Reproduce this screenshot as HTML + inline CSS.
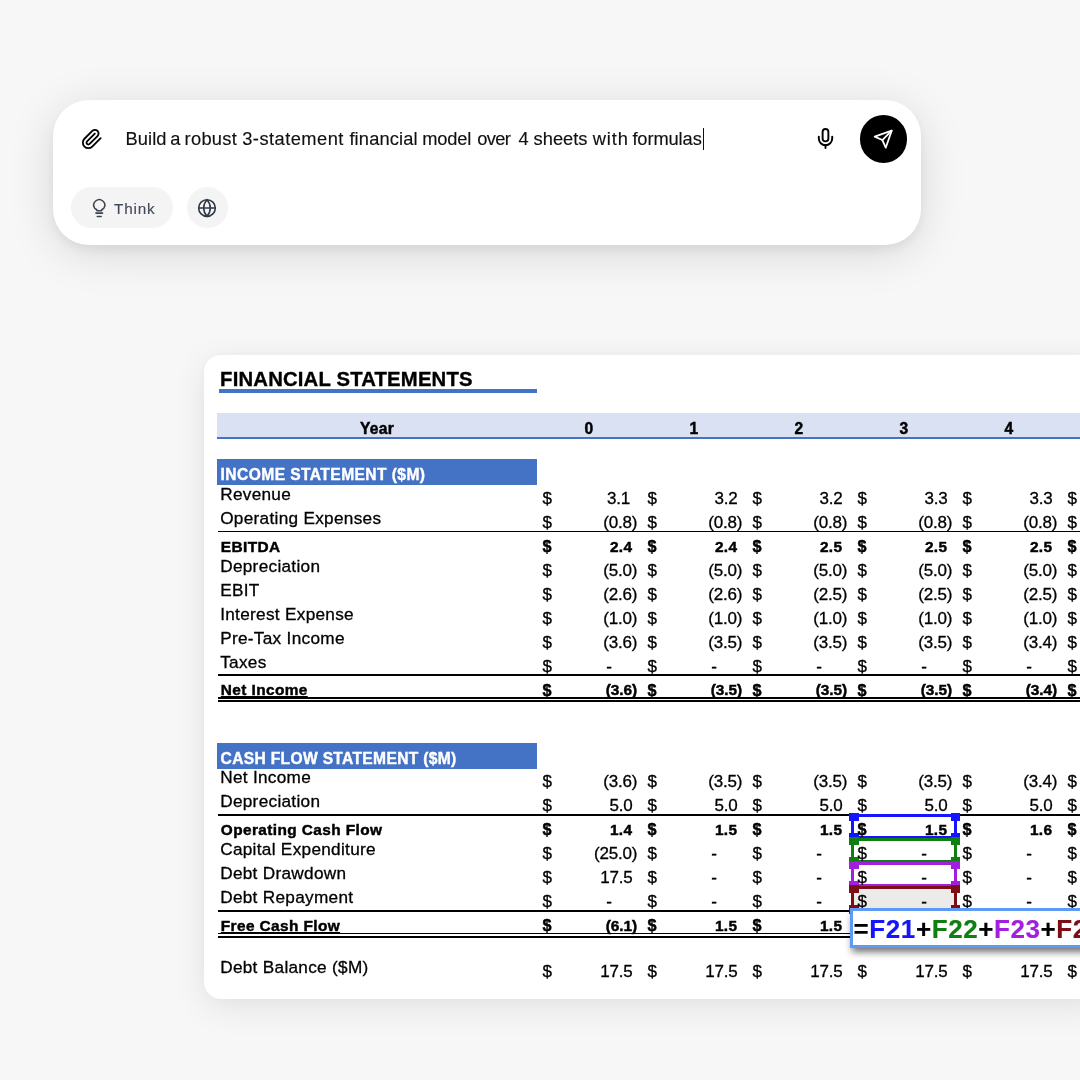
<!DOCTYPE html>
<html lang="en"><head><meta charset="utf-8"><title>Financial model</title>
<style>
html,body{margin:0;padding:0}
body{width:1080px;height:1080px;overflow:hidden;background:#f7f7f7;position:relative;font-family:"Liberation Sans",sans-serif;color:#000}
.abs,.t{position:absolute}
.t{white-space:nowrap;line-height:1;margin:0;-webkit-text-stroke:.3px}
#chat{left:53px;top:100.3px;width:867.7px;height:144.6px;border-radius:36px;background:#fff;box-shadow:0 8px 46px rgba(0,0,0,.13),0 5px 12px rgba(0,0,0,.06)}
#sheet{left:204.3px;top:354.7px;width:900px;height:644.3px;border-radius:17px;background:#fff;box-shadow:0 8px 34px rgba(0,0,0,.09),0 0 12px rgba(0,0,0,.03)}
.lab{font-size:17.2px;letter-spacing:.3px}
.b{font-weight:bold;-webkit-text-stroke:.45px}
.blab{font-size:15.4px;font-weight:bold;letter-spacing:.4px;-webkit-text-stroke:.45px}
.n{font-size:17px;letter-spacing:-.2px}
.nb{font-size:15.4px;font-weight:bold;letter-spacing:.35px;-webkit-text-stroke:.45px}
.hl{position:absolute;background:#000}
.band{position:absolute;left:216.9px;width:320.6px;background:#4472c4}
.bt{color:#fff;font-weight:bold;font-size:15.6px;letter-spacing:.42px;-webkit-text-stroke:.4px}
.u{text-decoration:underline;text-decoration-thickness:1.3px;text-underline-offset:1.4px}
</style></head><body><div id="root" style="position:absolute;left:0;top:0;width:1080px;height:1080px;will-change:transform">
<div id="chat" class="abs"></div>
<svg class="abs" style="left:80.5px;top:127.5px" width="22" height="22" viewBox="0 0 24 24" fill="none" stroke="#000" stroke-width="2" stroke-linecap="round" stroke-linejoin="round"><path d="m21.44 11.05-9.19 9.19a6 6 0 0 1-8.49-8.49l8.57-8.57A4 4 0 1 1 18 8.84l-8.59 8.57a2 2 0 0 1-2.83-2.83l8.49-8.48"/></svg>
<div class="t" id="prompt" style="left:0;top:130.2px;font-size:18.3px;color:#111;-webkit-text-stroke:.15px"><span style="position:absolute;left:125.5px;letter-spacing:0.075px">Build</span> <span style="position:absolute;left:170.3px;letter-spacing:0px">a</span> <span style="position:absolute;left:184.6px;letter-spacing:0.28px">robust</span> <span style="position:absolute;left:242.2px;letter-spacing:0.47px">3-statement</span> <span style="position:absolute;left:349.4px;letter-spacing:0.15px">financial</span> <span style="position:absolute;left:422.3px;letter-spacing:-0.175px">model</span> <span style="position:absolute;left:477.3px;letter-spacing:-0.667px">over</span> <span style="position:absolute;left:518.6px;letter-spacing:0px">4</span> <span style="position:absolute;left:533.6px;letter-spacing:0.0px">sheets</span> <span style="position:absolute;left:592.7px;letter-spacing:0.867px">with</span> <span style="position:absolute;left:632.4px;letter-spacing:-0.1px">formulas</span></div>
<div class="abs" style="left:702.8px;top:128.1px;width:1.2px;height:21.6px;background:#111"></div>
<svg class="abs" style="left:814.1px;top:127.2px" width="23" height="23" viewBox="0 0 24 24" fill="none" stroke="#000" stroke-width="2" stroke-linecap="round" stroke-linejoin="round"><path d="M12 2a3 3 0 0 0-3 3v7a3 3 0 0 0 6 0V5a3 3 0 0 0-3-3Z"/><path d="M19 10v2a7 7 0 0 1-14 0v-2"/><path d="M12 19v3"/></svg>
<div class="abs" style="left:859.5px;top:114.8px;width:47.8px;height:47.8px;border-radius:50%;background:#000"></div>
<svg class="abs" style="left:873.4px;top:128.7px" width="20.4" height="20.4" viewBox="0 0 24 24" fill="none" stroke="#fff" stroke-width="2.1" stroke-linecap="round" stroke-linejoin="round"><path d="m22 2-7 20-4-9-9-4Z"/><path d="M22 2 11 13"/></svg>
<div class="abs" style="left:71px;top:187.4px;width:102px;height:40.8px;border-radius:21px;background:#f4f4f4"></div>
<svg class="abs" style="left:90px;top:196px" width="20" height="24" viewBox="0 0 20 24" fill="none" stroke="#3b4250" stroke-width="1.55" stroke-linecap="round" stroke-linejoin="round"><path d="M7 14.7C7 13.100 5.300 13.200 4.490 11.950A5.500 5.500 0 1 1 14.010 11.950C13.200 13.200 11.500 13.100 11.500 14.700Z"/><path d="M5.9 17.1h6.700"/><path d="M7.300 20.400h3.900"/></svg>
<div class="t " style="left:114.1px;top:200.6px;font-size:15.3px;color:#414858;letter-spacing:.78px;-webkit-text-stroke:.12px">Think</div>
<div class="abs" style="left:186.8px;top:187.4px;width:40.8px;height:40.8px;border-radius:50%;background:#f4f4f4"></div>
<svg class="abs" style="left:197.2px;top:197.8px" width="20" height="20" viewBox="0 0 24 24" fill="none" stroke="#2f3747" stroke-width="1.9" stroke-linecap="round" stroke-linejoin="round"><circle cx="12" cy="12" r="10"/><path d="M2 12h20"/><path d="M12 2a15.300 15.300 0 0 1 4 10 15.300 15.300 0 0 1-4 10 15.300 15.300 0 0 1-4-10 15.300 15.300 0 0 1 4-10z"/></svg>
<div id="sheet" class="abs"></div>
<div class="t b" style="left:220.1px;top:368.7px;font-size:20.3px;letter-spacing:.18px;-webkit-text-stroke:.35px">FINANCIAL STATEMENTS</div>
<div class="abs" style="left:218.7px;top:389.1px;width:318.7px;height:3.5px;background:#4472c4"></div>
<div class="abs" style="left:217.2px;top:412.9px;width:900px;height:24.6px;background:#d9e1f2"></div>
<div class="abs" style="left:217.2px;top:437.2px;width:900px;height:1.5px;background:#4472c4"></div>
<div class="t b" style="left:360.0px;top:420.9px;font-size:15.6px;letter-spacing:.3px">Year</div>
<div class="t b" style="left:584.6px;top:420.9px;font-size:15.6px;">0</div>
<div class="t b" style="left:689.6px;top:420.9px;font-size:15.6px;">1</div>
<div class="t b" style="left:794.6px;top:420.9px;font-size:15.6px;">2</div>
<div class="t b" style="left:899.6px;top:420.9px;font-size:15.6px;">3</div>
<div class="t b" style="left:1004.6px;top:420.9px;font-size:15.6px;">4</div>
<div class="band" style="top:458.9px;height:25.8px"></div>
<div class="t bt" style="left:220.6px;top:467.0px;font-size:15.6px;letter-spacing:.42px">INCOME STATEMENT ($M)</div>
<div class="t lab" style="left:220.2px;top:485.7px;font-size:17.2px;">Revenue</div>
<div class="t n" style="left:542.6px;top:489.7px;font-size:17.0px;">$</div>
<div class="t n" style="left:550.0px;width:80px;text-align:right;top:489.7px;font-size:17.0px;">3.1</div>
<div class="t n" style="left:647.6px;top:489.7px;font-size:17.0px;">$</div>
<div class="t n" style="left:657.6px;width:80px;text-align:right;top:489.7px;font-size:17.0px;">3.2</div>
<div class="t n" style="left:752.6px;top:489.7px;font-size:17.0px;">$</div>
<div class="t n" style="left:762.6px;width:80px;text-align:right;top:489.7px;font-size:17.0px;">3.2</div>
<div class="t n" style="left:857.6px;top:489.7px;font-size:17.0px;">$</div>
<div class="t n" style="left:867.6px;width:80px;text-align:right;top:489.7px;font-size:17.0px;">3.3</div>
<div class="t n" style="left:962.6px;top:489.7px;font-size:17.0px;">$</div>
<div class="t n" style="left:972.6px;width:80px;text-align:right;top:489.7px;font-size:17.0px;">3.3</div>
<div class="t n" style="left:1067.6px;top:489.7px;font-size:17.0px;">$</div>
<div class="t lab" style="left:220.2px;top:509.7px;font-size:17.2px;">Operating Expenses</div>
<div class="t n" style="left:542.6px;top:513.6px;font-size:17.0px;">$</div>
<div class="t n" style="left:557.2px;width:80px;text-align:right;top:513.6px;font-size:17.0px;">(0.8)</div>
<div class="t n" style="left:647.6px;top:513.6px;font-size:17.0px;">$</div>
<div class="t n" style="left:662.2px;width:80px;text-align:right;top:513.6px;font-size:17.0px;">(0.8)</div>
<div class="t n" style="left:752.6px;top:513.6px;font-size:17.0px;">$</div>
<div class="t n" style="left:767.2px;width:80px;text-align:right;top:513.6px;font-size:17.0px;">(0.8)</div>
<div class="t n" style="left:857.6px;top:513.6px;font-size:17.0px;">$</div>
<div class="t n" style="left:872.2px;width:80px;text-align:right;top:513.6px;font-size:17.0px;">(0.8)</div>
<div class="t n" style="left:962.6px;top:513.6px;font-size:17.0px;">$</div>
<div class="t n" style="left:977.2px;width:80px;text-align:right;top:513.6px;font-size:17.0px;">(0.8)</div>
<div class="t n" style="left:1067.6px;top:513.6px;font-size:17.0px;">$</div>
<div class="hl" style="left:217.5px;width:900px;top:530.5px;height:1.9px"></div>
<div class="t blab" style="left:220.8px;top:538.5px;font-size:15.4px;">EBITDA</div>
<div class="t nb" style="left:542.6px;top:537.8px;font-size:16.2px;">$</div>
<div class="t nb" style="left:552.4px;width:80px;text-align:right;top:538.5px;font-size:15.4px;">2.4</div>
<div class="t nb" style="left:647.6px;top:537.8px;font-size:16.2px;">$</div>
<div class="t nb" style="left:657.4px;width:80px;text-align:right;top:538.5px;font-size:15.4px;">2.4</div>
<div class="t nb" style="left:752.6px;top:537.8px;font-size:16.2px;">$</div>
<div class="t nb" style="left:762.4px;width:80px;text-align:right;top:538.5px;font-size:15.4px;">2.5</div>
<div class="t nb" style="left:857.6px;top:537.8px;font-size:16.2px;">$</div>
<div class="t nb" style="left:867.4px;width:80px;text-align:right;top:538.5px;font-size:15.4px;">2.5</div>
<div class="t nb" style="left:962.6px;top:537.8px;font-size:16.2px;">$</div>
<div class="t nb" style="left:972.4px;width:80px;text-align:right;top:538.5px;font-size:15.4px;">2.5</div>
<div class="t nb" style="left:1067.6px;top:537.8px;font-size:16.2px;">$</div>
<div class="t lab" style="left:220.2px;top:557.6px;font-size:17.2px;">Depreciation</div>
<div class="t n" style="left:542.6px;top:561.6px;font-size:17.0px;">$</div>
<div class="t n" style="left:557.2px;width:80px;text-align:right;top:561.6px;font-size:17.0px;">(5.0)</div>
<div class="t n" style="left:647.6px;top:561.6px;font-size:17.0px;">$</div>
<div class="t n" style="left:662.2px;width:80px;text-align:right;top:561.6px;font-size:17.0px;">(5.0)</div>
<div class="t n" style="left:752.6px;top:561.6px;font-size:17.0px;">$</div>
<div class="t n" style="left:767.2px;width:80px;text-align:right;top:561.6px;font-size:17.0px;">(5.0)</div>
<div class="t n" style="left:857.6px;top:561.6px;font-size:17.0px;">$</div>
<div class="t n" style="left:872.2px;width:80px;text-align:right;top:561.6px;font-size:17.0px;">(5.0)</div>
<div class="t n" style="left:962.6px;top:561.6px;font-size:17.0px;">$</div>
<div class="t n" style="left:977.2px;width:80px;text-align:right;top:561.6px;font-size:17.0px;">(5.0)</div>
<div class="t n" style="left:1067.6px;top:561.6px;font-size:17.0px;">$</div>
<div class="t lab" style="left:220.2px;top:581.6px;font-size:17.2px;">EBIT</div>
<div class="t n" style="left:542.6px;top:585.6px;font-size:17.0px;">$</div>
<div class="t n" style="left:557.2px;width:80px;text-align:right;top:585.6px;font-size:17.0px;">(2.6)</div>
<div class="t n" style="left:647.6px;top:585.6px;font-size:17.0px;">$</div>
<div class="t n" style="left:662.2px;width:80px;text-align:right;top:585.6px;font-size:17.0px;">(2.6)</div>
<div class="t n" style="left:752.6px;top:585.6px;font-size:17.0px;">$</div>
<div class="t n" style="left:767.2px;width:80px;text-align:right;top:585.6px;font-size:17.0px;">(2.5)</div>
<div class="t n" style="left:857.6px;top:585.6px;font-size:17.0px;">$</div>
<div class="t n" style="left:872.2px;width:80px;text-align:right;top:585.6px;font-size:17.0px;">(2.5)</div>
<div class="t n" style="left:962.6px;top:585.6px;font-size:17.0px;">$</div>
<div class="t n" style="left:977.2px;width:80px;text-align:right;top:585.6px;font-size:17.0px;">(2.5)</div>
<div class="t n" style="left:1067.6px;top:585.6px;font-size:17.0px;">$</div>
<div class="t lab" style="left:220.2px;top:605.6px;font-size:17.2px;">Interest Expense</div>
<div class="t n" style="left:542.6px;top:609.6px;font-size:17.0px;">$</div>
<div class="t n" style="left:557.2px;width:80px;text-align:right;top:609.6px;font-size:17.0px;">(1.0)</div>
<div class="t n" style="left:647.6px;top:609.6px;font-size:17.0px;">$</div>
<div class="t n" style="left:662.2px;width:80px;text-align:right;top:609.6px;font-size:17.0px;">(1.0)</div>
<div class="t n" style="left:752.6px;top:609.6px;font-size:17.0px;">$</div>
<div class="t n" style="left:767.2px;width:80px;text-align:right;top:609.6px;font-size:17.0px;">(1.0)</div>
<div class="t n" style="left:857.6px;top:609.6px;font-size:17.0px;">$</div>
<div class="t n" style="left:872.2px;width:80px;text-align:right;top:609.6px;font-size:17.0px;">(1.0)</div>
<div class="t n" style="left:962.6px;top:609.6px;font-size:17.0px;">$</div>
<div class="t n" style="left:977.2px;width:80px;text-align:right;top:609.6px;font-size:17.0px;">(1.0)</div>
<div class="t n" style="left:1067.6px;top:609.6px;font-size:17.0px;">$</div>
<div class="t lab" style="left:220.2px;top:629.6px;font-size:17.2px;">Pre-Tax Income</div>
<div class="t n" style="left:542.6px;top:633.5px;font-size:17.0px;">$</div>
<div class="t n" style="left:557.2px;width:80px;text-align:right;top:633.5px;font-size:17.0px;">(3.6)</div>
<div class="t n" style="left:647.6px;top:633.5px;font-size:17.0px;">$</div>
<div class="t n" style="left:662.2px;width:80px;text-align:right;top:633.5px;font-size:17.0px;">(3.5)</div>
<div class="t n" style="left:752.6px;top:633.5px;font-size:17.0px;">$</div>
<div class="t n" style="left:767.2px;width:80px;text-align:right;top:633.5px;font-size:17.0px;">(3.5)</div>
<div class="t n" style="left:857.6px;top:633.5px;font-size:17.0px;">$</div>
<div class="t n" style="left:872.2px;width:80px;text-align:right;top:633.5px;font-size:17.0px;">(3.5)</div>
<div class="t n" style="left:962.6px;top:633.5px;font-size:17.0px;">$</div>
<div class="t n" style="left:977.2px;width:80px;text-align:right;top:633.5px;font-size:17.0px;">(3.4)</div>
<div class="t n" style="left:1067.6px;top:633.5px;font-size:17.0px;">$</div>
<div class="t lab" style="left:220.2px;top:653.6px;font-size:17.2px;">Taxes</div>
<div class="t n" style="left:542.6px;top:657.5px;font-size:17.0px;">$</div>
<div class="t n" style="left:606.3px;top:657.5px;font-size:17.0px;">-</div>
<div class="t n" style="left:647.6px;top:657.5px;font-size:17.0px;">$</div>
<div class="t n" style="left:711.3px;top:657.5px;font-size:17.0px;">-</div>
<div class="t n" style="left:752.6px;top:657.5px;font-size:17.0px;">$</div>
<div class="t n" style="left:816.3px;top:657.5px;font-size:17.0px;">-</div>
<div class="t n" style="left:857.6px;top:657.5px;font-size:17.0px;">$</div>
<div class="t n" style="left:921.3px;top:657.5px;font-size:17.0px;">-</div>
<div class="t n" style="left:962.6px;top:657.5px;font-size:17.0px;">$</div>
<div class="t n" style="left:1026.3px;top:657.5px;font-size:17.0px;">-</div>
<div class="t n" style="left:1067.6px;top:657.5px;font-size:17.0px;">$</div>
<div class="hl" style="left:217.5px;width:900px;top:674.4px;height:1.9px"></div>
<div class="t blab u" style="left:220.8px;top:682.4px;font-size:15.4px;">Net Income</div>
<div class="t nb" style="left:542.6px;top:681.7px;font-size:16.2px;">$</div>
<div class="t nb" style="left:557.2px;width:80px;text-align:right;top:682.4px;font-size:15.4px;letter-spacing:-.05px">(3.6)</div>
<div class="t nb" style="left:647.6px;top:681.7px;font-size:16.2px;">$</div>
<div class="t nb" style="left:662.2px;width:80px;text-align:right;top:682.4px;font-size:15.4px;letter-spacing:-.05px">(3.5)</div>
<div class="t nb" style="left:752.6px;top:681.7px;font-size:16.2px;">$</div>
<div class="t nb" style="left:767.2px;width:80px;text-align:right;top:682.4px;font-size:15.4px;letter-spacing:-.05px">(3.5)</div>
<div class="t nb" style="left:857.6px;top:681.7px;font-size:16.2px;">$</div>
<div class="t nb" style="left:872.2px;width:80px;text-align:right;top:682.4px;font-size:15.4px;letter-spacing:-.05px">(3.5)</div>
<div class="t nb" style="left:962.6px;top:681.7px;font-size:16.2px;">$</div>
<div class="t nb" style="left:977.2px;width:80px;text-align:right;top:682.4px;font-size:15.4px;letter-spacing:-.05px">(3.4)</div>
<div class="t nb" style="left:1067.6px;top:681.7px;font-size:16.2px;">$</div>
<div class="hl" style="left:217.5px;width:900px;top:697.1px;height:1.8px"></div>
<div class="hl" style="left:217.5px;width:900px;top:700.4px;height:1.8px"></div>
<div class="band" style="top:742.8px;height:25.8px"></div>
<div class="t bt" style="left:220.6px;top:750.9px;font-size:15.6px;letter-spacing:.33px">CASH FLOW STATEMENT ($M)</div>
<div class="t lab" style="left:220.2px;top:769.2px;font-size:17.2px;">Net Income</div>
<div class="t n" style="left:542.6px;top:773.2px;font-size:17.0px;">$</div>
<div class="t n" style="left:557.2px;width:80px;text-align:right;top:773.2px;font-size:17.0px;">(3.6)</div>
<div class="t n" style="left:647.6px;top:773.2px;font-size:17.0px;">$</div>
<div class="t n" style="left:662.2px;width:80px;text-align:right;top:773.2px;font-size:17.0px;">(3.5)</div>
<div class="t n" style="left:752.6px;top:773.2px;font-size:17.0px;">$</div>
<div class="t n" style="left:767.2px;width:80px;text-align:right;top:773.2px;font-size:17.0px;">(3.5)</div>
<div class="t n" style="left:857.6px;top:773.2px;font-size:17.0px;">$</div>
<div class="t n" style="left:872.2px;width:80px;text-align:right;top:773.2px;font-size:17.0px;">(3.5)</div>
<div class="t n" style="left:962.6px;top:773.2px;font-size:17.0px;">$</div>
<div class="t n" style="left:977.2px;width:80px;text-align:right;top:773.2px;font-size:17.0px;">(3.4)</div>
<div class="t n" style="left:1067.6px;top:773.2px;font-size:17.0px;">$</div>
<div class="t lab" style="left:220.2px;top:793.2px;font-size:17.2px;">Depreciation</div>
<div class="t n" style="left:542.6px;top:797.1px;font-size:17.0px;">$</div>
<div class="t n" style="left:552.6px;width:80px;text-align:right;top:797.1px;font-size:17.0px;">5.0</div>
<div class="t n" style="left:647.6px;top:797.1px;font-size:17.0px;">$</div>
<div class="t n" style="left:657.6px;width:80px;text-align:right;top:797.1px;font-size:17.0px;">5.0</div>
<div class="t n" style="left:752.6px;top:797.1px;font-size:17.0px;">$</div>
<div class="t n" style="left:762.6px;width:80px;text-align:right;top:797.1px;font-size:17.0px;">5.0</div>
<div class="t n" style="left:857.6px;top:797.1px;font-size:17.0px;">$</div>
<div class="t n" style="left:867.6px;width:80px;text-align:right;top:797.1px;font-size:17.0px;">5.0</div>
<div class="t n" style="left:962.6px;top:797.1px;font-size:17.0px;">$</div>
<div class="t n" style="left:972.6px;width:80px;text-align:right;top:797.1px;font-size:17.0px;">5.0</div>
<div class="t n" style="left:1067.6px;top:797.1px;font-size:17.0px;">$</div>
<div class="hl" style="left:217.5px;width:900px;top:814.0px;height:1.9px"></div>
<div class="t blab" style="left:220.8px;top:822.0px;font-size:15.4px;">Operating Cash Flow</div>
<div class="t nb" style="left:542.6px;top:821.3px;font-size:16.2px;">$</div>
<div class="t nb" style="left:552.4px;width:80px;text-align:right;top:822.0px;font-size:15.4px;">1.4</div>
<div class="t nb" style="left:647.6px;top:821.3px;font-size:16.2px;">$</div>
<div class="t nb" style="left:657.4px;width:80px;text-align:right;top:822.0px;font-size:15.4px;">1.5</div>
<div class="t nb" style="left:752.6px;top:821.3px;font-size:16.2px;">$</div>
<div class="t nb" style="left:762.4px;width:80px;text-align:right;top:822.0px;font-size:15.4px;">1.5</div>
<div class="t nb" style="left:962.6px;top:821.3px;font-size:16.2px;">$</div>
<div class="t nb" style="left:972.4px;width:80px;text-align:right;top:822.0px;font-size:15.4px;">1.6</div>
<div class="t nb" style="left:1067.6px;top:821.3px;font-size:16.2px;">$</div>
<div class="t lab" style="left:220.2px;top:841.1px;font-size:17.2px;">Capital Expenditure</div>
<div class="t n" style="left:542.6px;top:845.1px;font-size:17.0px;">$</div>
<div class="t n" style="left:557.2px;width:80px;text-align:right;top:845.1px;font-size:17.0px;">(25.0)</div>
<div class="t n" style="left:647.6px;top:845.1px;font-size:17.0px;">$</div>
<div class="t n" style="left:711.3px;top:845.1px;font-size:17.0px;">-</div>
<div class="t n" style="left:752.6px;top:845.1px;font-size:17.0px;">$</div>
<div class="t n" style="left:816.3px;top:845.1px;font-size:17.0px;">-</div>
<div class="t n" style="left:962.6px;top:845.1px;font-size:17.0px;">$</div>
<div class="t n" style="left:1026.3px;top:845.1px;font-size:17.0px;">-</div>
<div class="t n" style="left:1067.6px;top:845.1px;font-size:17.0px;">$</div>
<div class="t lab" style="left:220.2px;top:865.1px;font-size:17.2px;">Debt Drawdown</div>
<div class="t n" style="left:542.6px;top:869.1px;font-size:17.0px;">$</div>
<div class="t n" style="left:552.6px;width:80px;text-align:right;top:869.1px;font-size:17.0px;">17.5</div>
<div class="t n" style="left:647.6px;top:869.1px;font-size:17.0px;">$</div>
<div class="t n" style="left:711.3px;top:869.1px;font-size:17.0px;">-</div>
<div class="t n" style="left:752.6px;top:869.1px;font-size:17.0px;">$</div>
<div class="t n" style="left:816.3px;top:869.1px;font-size:17.0px;">-</div>
<div class="t n" style="left:962.6px;top:869.1px;font-size:17.0px;">$</div>
<div class="t n" style="left:1026.3px;top:869.1px;font-size:17.0px;">-</div>
<div class="t n" style="left:1067.6px;top:869.1px;font-size:17.0px;">$</div>
<div class="t lab" style="left:220.2px;top:889.1px;font-size:17.2px;">Debt Repayment</div>
<div class="t n" style="left:542.6px;top:893.1px;font-size:17.0px;">$</div>
<div class="t n" style="left:606.3px;top:893.1px;font-size:17.0px;">-</div>
<div class="t n" style="left:647.6px;top:893.1px;font-size:17.0px;">$</div>
<div class="t n" style="left:711.3px;top:893.1px;font-size:17.0px;">-</div>
<div class="t n" style="left:752.6px;top:893.1px;font-size:17.0px;">$</div>
<div class="t n" style="left:816.3px;top:893.1px;font-size:17.0px;">-</div>
<div class="t n" style="left:962.6px;top:893.1px;font-size:17.0px;">$</div>
<div class="t n" style="left:1026.3px;top:893.1px;font-size:17.0px;">-</div>
<div class="t n" style="left:1067.6px;top:893.1px;font-size:17.0px;">$</div>
<div class="hl" style="left:217.5px;width:900px;top:909.9px;height:1.9px"></div>
<div class="t blab u" style="left:220.8px;top:917.9px;font-size:15.4px;">Free Cash Flow</div>
<div class="t nb" style="left:542.6px;top:917.2px;font-size:16.2px;">$</div>
<div class="t nb" style="left:557.2px;width:80px;text-align:right;top:917.9px;font-size:15.4px;letter-spacing:-.05px">(6.1)</div>
<div class="t nb" style="left:647.6px;top:917.2px;font-size:16.2px;">$</div>
<div class="t nb" style="left:657.4px;width:80px;text-align:right;top:917.9px;font-size:15.4px;">1.5</div>
<div class="t nb" style="left:752.6px;top:917.2px;font-size:16.2px;">$</div>
<div class="t nb" style="left:762.4px;width:80px;text-align:right;top:917.9px;font-size:15.4px;">1.5</div>
<div class="t nb" style="left:857.6px;top:917.2px;font-size:16.2px;">$</div>
<div class="t nb" style="left:867.4px;width:80px;text-align:right;top:917.9px;font-size:15.4px;">1.5</div>
<div class="t nb" style="left:962.6px;top:917.2px;font-size:16.2px;">$</div>
<div class="t nb" style="left:972.4px;width:80px;text-align:right;top:917.9px;font-size:15.4px;">1.5</div>
<div class="t nb" style="left:1067.6px;top:917.2px;font-size:16.2px;">$</div>
<div class="hl" style="left:217.5px;width:900px;top:932.6px;height:1.8px"></div>
<div class="hl" style="left:217.5px;width:900px;top:935.9px;height:1.8px"></div>
<div class="t lab" style="left:220.2px;top:959.1px;font-size:17.2px;">Debt Balance ($M)</div>
<div class="t n" style="left:542.6px;top:962.9px;font-size:17.0px;">$</div>
<div class="t n" style="left:552.6px;width:80px;text-align:right;top:962.9px;font-size:17.0px;">17.5</div>
<div class="t n" style="left:647.6px;top:962.9px;font-size:17.0px;">$</div>
<div class="t n" style="left:657.6px;width:80px;text-align:right;top:962.9px;font-size:17.0px;">17.5</div>
<div class="t n" style="left:752.6px;top:962.9px;font-size:17.0px;">$</div>
<div class="t n" style="left:762.6px;width:80px;text-align:right;top:962.9px;font-size:17.0px;">17.5</div>
<div class="t n" style="left:857.6px;top:962.9px;font-size:17.0px;">$</div>
<div class="t n" style="left:867.6px;width:80px;text-align:right;top:962.9px;font-size:17.0px;">17.5</div>
<div class="t n" style="left:962.6px;top:962.9px;font-size:17.0px;">$</div>
<div class="t n" style="left:972.6px;width:80px;text-align:right;top:962.9px;font-size:17.0px;">17.5</div>
<div class="t n" style="left:1067.6px;top:962.9px;font-size:17.0px;">$</div>
<div class="abs" style="left:851.1px;top:814.4px;width:99.7px;height:18.6px;border:3.6px solid #1414ff;background:transparent"></div>
<div class="abs" style="left:849.4px;top:812.8px;width:9.2px;height:8.6px;background:#1414ff"></div>
<div class="abs" style="left:849.4px;top:833.2px;width:9.2px;height:8.6px;background:#1414ff"></div>
<div class="abs" style="left:950.6px;top:812.8px;width:9.2px;height:8.6px;background:#1414ff"></div>
<div class="abs" style="left:950.6px;top:833.2px;width:9.2px;height:8.6px;background:#1414ff"></div>
<div class="abs" style="left:851.1px;top:838.1px;width:99.7px;height:18.6px;border:3.6px solid #0f7f12;background:transparent"></div>
<div class="abs" style="left:849.4px;top:836.5px;width:9.2px;height:8.6px;background:#0f7f12"></div>
<div class="abs" style="left:849.4px;top:856.9px;width:9.2px;height:8.6px;background:#0f7f12"></div>
<div class="abs" style="left:950.6px;top:836.5px;width:9.2px;height:8.6px;background:#0f7f12"></div>
<div class="abs" style="left:950.6px;top:856.9px;width:9.2px;height:8.6px;background:#0f7f12"></div>
<div class="abs" style="left:851.1px;top:862.2px;width:99.7px;height:18.6px;border:3.6px solid #a21fe0;background:transparent"></div>
<div class="abs" style="left:849.4px;top:860.6px;width:9.2px;height:8.6px;background:#a21fe0"></div>
<div class="abs" style="left:849.4px;top:881.0px;width:9.2px;height:8.6px;background:#a21fe0"></div>
<div class="abs" style="left:950.6px;top:860.6px;width:9.2px;height:8.6px;background:#a21fe0"></div>
<div class="abs" style="left:950.6px;top:881.0px;width:9.2px;height:8.6px;background:#a21fe0"></div>
<div class="abs" style="left:851.1px;top:886.2px;width:99.7px;height:18.6px;border:3.6px solid #7d0f14;background:#edeaea"></div>
<div class="abs" style="left:849.4px;top:884.6px;width:9.2px;height:8.6px;background:#7d0f14"></div>
<div class="abs" style="left:849.4px;top:905.0px;width:9.2px;height:8.6px;background:#7d0f14"></div>
<div class="abs" style="left:950.6px;top:884.6px;width:9.2px;height:8.6px;background:#7d0f14"></div>
<div class="abs" style="left:950.6px;top:905.0px;width:9.2px;height:8.6px;background:#7d0f14"></div>
<div class="t nb" style="left:857.6px;top:821.3px;font-size:16.2px;">$</div>
<div class="t nb" style="left:867.4px;width:80px;text-align:right;top:822.0px;font-size:15.4px;">1.5</div>
<div class="t n" style="left:857.6px;top:845.1px;font-size:17.0px;">$</div>
<div class="t n" style="left:921.3px;top:845.1px;font-size:17.0px;">-</div>
<div class="t n" style="left:857.6px;top:869.1px;font-size:17.0px;">$</div>
<div class="t n" style="left:921.3px;top:869.1px;font-size:17.0px;">-</div>
<div class="t n" style="left:857.6px;top:893.1px;font-size:17.0px;">$</div>
<div class="t n" style="left:921.3px;top:893.1px;font-size:17.0px;">-</div>
<div class="abs" style="left:849.6px;top:908.3px;width:300px;height:33.4px;border:3.2px solid #5e9af3;background:#fff;box-shadow:0 6px 7px -2px rgba(0,0,0,.55)"></div>
<div class="t " id="formula" style="left:853.6px;top:916.2px;font-size:26px;font-weight:bold;letter-spacing:.58px;-webkit-text-stroke:.15px"><span>=</span><span style="color:#1414ff">F21</span><span>+</span><span style="color:#0f7f12">F22</span><span>+</span><span style="color:#a21fe0">F23</span><span>+</span><span style="color:#7d0f14">F24</span></div>
</div></body></html>
